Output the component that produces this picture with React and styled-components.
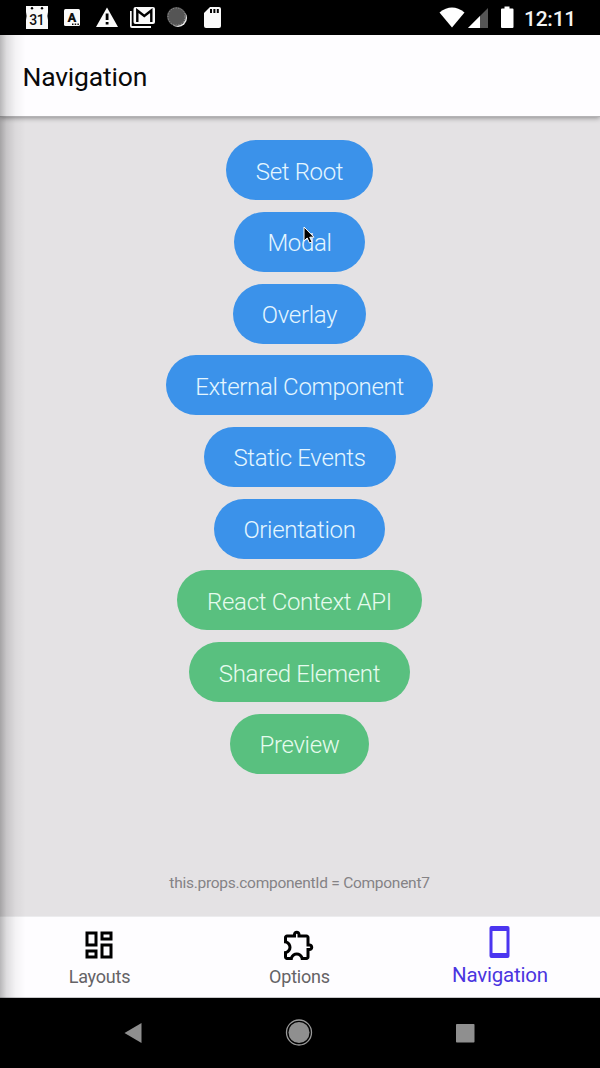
import React from "react";
import styled, { createGlobalStyle } from "styled-components";

const GlobalStyle = createGlobalStyle`
  * { box-sizing: border-box; }
  body { margin: 0; background: #000; font-family: Roboto, "Liberation Sans", sans-serif; }
  svg { display: block; flex: none; }
`;

const Phone = styled.div`
  width: 600px;
  height: 1068px;
  display: flex;
  flex-direction: column;
  overflow: hidden;
  background: #000;
`;

const StatusBar = styled.header`
  height: 35px;
  display: flex;
  align-items: center;
  justify-content: space-between;
  flex: none;
`;

const Screen = styled.main`
  position: relative;
  height: 963px;
  flex: none;
  display: flex;
  flex-direction: column;
  background: #e4e2e4;
`;

const EdgeShadow = styled.div`
  position: absolute;
  left: 0;
  top: 0;
  bottom: 0;
  width: 26px;
  background: linear-gradient(to right, rgba(0, 0, 0, 0.28), rgba(0, 0, 0, 0.13) 25%, rgba(0, 0, 0, 0.04) 60%, rgba(0, 0, 0, 0));
  pointer-events: none;
`;

const TopBar = styled.div`
  height: 82px;
  flex: none;
  display: flex;
  align-items: center;
  padding: 3px 0 0 22.5px;
  background: #fefdff;
  border-bottom: 1px solid #b4b3b5;
  box-shadow: 0 1px 5px rgba(0, 0, 0, 0.4);
`;

const Title = styled.h1`
  margin: 0;
  font-size: 26.5px;
  font-weight: 400;
  line-height: 32px;
  letter-spacing: -0.2px;
  color: #0a0a0a;
`;

const Content = styled.div`
  flex: 1;
  display: flex;
  flex-direction: column;
  align-items: center;
  padding: 23.2px 1px 0 0;
`;

const ButtonList = styled.div`
  display: flex;
  flex-direction: column;
  align-items: center;
  gap: 11.7px;
`;

const PillButton = styled.button`
  width: ${(p) => p.$width}px;
  height: 60px;
  padding: 3px 0 0;
  border: 0;
  border-radius: 30px;
  background: ${(p) => (p.$green ? "#59c07f" : "#3b92ea")};
  color: ${(p) => (p.$green ? "#e6fbee" : "#e4f6ff")};
  font: 300 24px/30px Roboto, "Liberation Sans", sans-serif;
  letter-spacing: -0.32px;
  white-space: nowrap;
`;

const Footnote = styled.p`
  margin: auto 0 23px;
  font-size: 15.5px;
  line-height: 20px;
  letter-spacing: -0.27px;
  color: #858386;
`;

const Tabs = styled.nav`
  height: 82px;
  flex: none;
  display: grid;
  grid-template-columns: repeat(3, 1fr);
  background: #fefdff;
  border-top: 1px solid #ececee;
  border-bottom: 1px solid #c8c8ca;
`;

const Tab = styled.div`
  display: flex;
  flex-direction: column;
  align-items: center;
  padding-top: ${(p) => (p.$active ? 5 : 10)}px;
  padding-right: ${(p) => (p.$active ? 0 : 2)}px;
  gap: ${(p) => (p.$active ? 0 : 2)}px;
  color: ${(p) => (p.$active ? "#4b35f0" : "#000")};
`;

const TabLabel = styled.span`
  margin-top: ${(p) => (p.$active ? -1 : 0)}px;
  font-size: ${(p) => (p.$active ? 20.5 : 18)}px;
  line-height: 24px;
  letter-spacing: -0.2px;
  transform: translateX(${(p) => (p.$active ? 0 : 0.5)}px);
  color: ${(p) => (p.$active ? "#4b35e0" : "#656366")};
`;

const SystemBar = styled.footer`
  flex: 1;
`;

const Cursor = styled.svg`
  position: absolute;
  left: 303px;
  top: 191px;
`;

const buttons = [
  { label: "Set Root", width: 147.5 },
  { label: "Modal", width: 131.5 },
  { label: "Overlay", width: 133.5 },
  { label: "External Component", width: 267.5 },
  { label: "Static Events", width: 192 },
  { label: "Orientation", width: 171.5 },
  { label: "React Context API", width: 245, green: true },
  { label: "Shared Element", width: 220.5, green: true },
  { label: "Preview", width: 139, green: true },
];

const StatusText = styled.text`
  font-family: Roboto, "Liberation Sans", sans-serif;
`;

const Clock = styled.span`
  width: 76px;
  padding-top: 2px;
  font-size: 21px;
  font-weight: 500;
  line-height: 24px;
  letter-spacing: -0.25px;
  color: #f4f4f4;
`;

function Notifications() {
  return (
    <svg width="240" height="35" viewBox="0 0 240 35" fill="#fafafa">
      <path d="M26 6h22v6l-.6 4 .6 4v9H26v-9l.6-4-.6-4z" />
      <circle cx="32" cy="8.300" r="1.200" fill="#000" />
      <circle cx="42" cy="8.300" r="1.200" fill="#000" />
      <StatusText x="36.700" y="24.500" fontSize="14" fontWeight="500" textAnchor="middle" letterSpacing="-0.5" fill="#111">31</StatusText>
      <rect x="64" y="9" width="16" height="17" rx="1.500" />
      <StatusText x="72" y="22" fontSize="13" fontWeight="900" textAnchor="middle" fill="#111">A</StatusText>
      <path d="M72 23.500h1.500v1.500H72zM74.700 23.500h1.500v1.500h-1.500zM77.400 23.500h1.500v1.500h-1.500z" fill="#111" />
      <path d="M107 7.500 118 27H96z" />
      <path d="M105.700 13.500h2.800v6.500h-2.800zM105.700 22h2.800v2.600h-2.800z" fill="#000" />
      <path d="M130 11h1.700v15H151v2h-19q-2 0-2-2z" />
      <rect x="133.500" y="7" width="21.500" height="17" rx="2" />
      <path d="M137.300 22V10.500l7 5.500 7-5.500V22" fill="none" stroke="#000" strokeWidth="2.400" />
      <circle cx="178" cy="18" r="9" fill="#e8e8e8" />
      <circle cx="176.500" cy="16.500" r="9.500" fill="#555" />
      <circle cx="176.500" cy="16.500" r="8.500" fill="none" stroke="#999" strokeWidth="1" strokeDasharray="1 1.600" />
      <path d="M210 7h9q2 0 2 2v17q0 2-2 2h-13q-2 0-2-2V13z" />
      <path d="M210 9h2v4h-2zM213.400 9h2v4h-2zM216.800 9h2v4h-2z" fill="#000" />
    </svg>
  );
}

function Connectivity() {
  return (
    <svg width="85" height="35" viewBox="439 0 85 35" fill="#fff">
      <path d="M439.500 12.500q12.500-10 25 0L452 27.500z" />
      <path d="M488 8v20h-20z" fill="#555" />
      <path d="M480 16v12h-12z" />
      <path d="M504.500 6.500h5v2h3q1 0 1 1V27q0 1-1 1h-10.500q-1 0-1-1V9.500q0-1 1-1h2.500z" />
    </svg>
  );
}

const StatusRight = styled.div`
  display: flex;
  align-items: center;
`;

export default function App() {
  return (
    <>
      <GlobalStyle />
      <Phone>
        <StatusBar>
          <Notifications />
          <StatusRight>
            <Connectivity />
            <Clock>12:11</Clock>
          </StatusRight>
        </StatusBar>
        <Screen>
          <TopBar>
            <Title>Navigation</Title>
          </TopBar>
          <Content>
            <ButtonList>
              {buttons.map((b) => (
                <PillButton key={b.label} $width={b.width} $green={b.green}>
                  {b.label}
                </PillButton>
              ))}
            </ButtonList>
            <Footnote>this.props.componentId = Component7</Footnote>
          </Content>
          <Tabs>
            <Tab>
              <svg width="36" height="36" viewBox="0 0 24 24" fill="currentColor">
                <path d="M19 5v2h-4V5h4M9 5v6H5V5h4m10 8v6h-4v-6h4M9 17v2H5v-2h4M21 3h-8v6h8V3zM11 3H3v10h8V3zm10 8h-8v10h8V11zm-10 4H3v6h8v-6z" />
              </svg>
              <TabLabel>Layouts</TabLabel>
            </Tab>
            <Tab>
              <svg width="36" height="36" viewBox="0 0 24 24" fill="currentColor">
                <path d="M10.500 4.500c.28 0 .5.220.5.500v2h6v6h2c.28 0 .5.220.5.500s-.22.500-.5.500h-2v6h-2.120c-.68-1.750-2.390-3-4.380-3s-3.700 1.250-4.380 3H4v-2.120c1.750-.68 3-2.390 3-4.380 0-1.990-1.240-3.700-2.990-4.380L4 7h6V5c0-.28.220-.5.500-.5m0-2C9.120 2.500 8 3.620 8 5H4c-1.100 0-1.990.9-1.990 2v3.800h.29c1.490 0 2.700 1.210 2.700 2.700s-1.210 2.700-2.700 2.700H2V20c0 1.100.9 2 2 2h3.800v-.3c0-1.490 1.210-2.700 2.700-2.700s2.700 1.210 2.700 2.700v.3H17c1.100 0 2-.9 2-2v-4c1.380 0 2.500-1.120 2.500-2.500S20.380 11 19 11V7c0-1.100-.9-2-2-2h-4c0-1.380-1.120-2.500-2.500-2.500z" />
              </svg>
              <TabLabel>Options</TabLabel>
            </Tab>
            <Tab $active>
              <svg width="42" height="42" viewBox="0 0 42 42" fill="currentColor">
                <path fillRule="evenodd" d="M12.500 4h16q2 0 2 2v28q0 2-2 2h-16q-2 0-2-2V6q0-2 2-2zM13.500 9v22h14V9z" />
              </svg>
              <TabLabel $active>Navigation</TabLabel>
            </Tab>
          </Tabs>
          <EdgeShadow />
          <Cursor width="14" height="20" viewBox="0 0 14 20">
            <path d="M1 1v14l3.200-3 2.300 5 2.500-1.200-2.300-4.600H11z" fill="#000" stroke="#fff" strokeWidth="1" />
          </Cursor>
        </Screen>
        <SystemBar>
          <svg width="600" height="70" viewBox="0 998 600 70" fill="#8f8f8f">
            <path d="M141.500 1023v20L124.500 1033z" />
            <circle cx="299" cy="1032.500" r="10.500" />
            <circle cx="299" cy="1032.500" r="12.500" fill="none" stroke="#999" strokeWidth="1.300" />
            <rect x="456" y="1024" width="18.500" height="18.500" rx="0.800" />
          </svg>
        </SystemBar>
      </Phone>
    </>
  );
}
